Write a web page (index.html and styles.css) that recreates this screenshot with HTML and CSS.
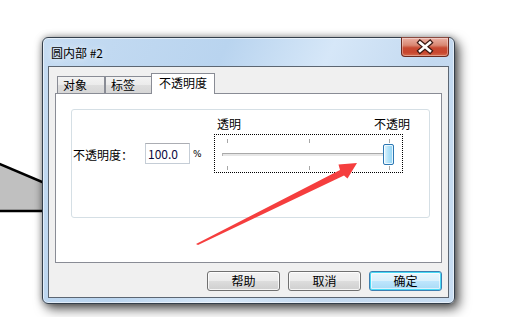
FILE: index.html
```html
<!DOCTYPE html>
<html lang="zh-CN">
<head>
<meta charset="utf-8">
<title>圆内部 #2</title>
<link rel="stylesheet" href="styles.css">
</head>
<body>
<div class="desk">
  <svg class="diagram" width="506" height="317" viewBox="0 0 506 317">
    <polygon points="-5,162 120,215 120,211 -5,211" fill="#c0c0c0"/>
    <line x1="-5" y1="162" x2="120" y2="215" stroke="#000" stroke-width="2.5"/>
    <line x1="-5" y1="211" x2="120" y2="211" stroke="#000" stroke-width="2.5"/>
  </svg>

  <div class="window">
    <div class="titlebar"><span class="title">圆内部 #2</span></div>
    <div class="close">
      <svg width="46" height="18" viewBox="0 0 46 18">
        <path d="M18 4.5 L28 13 M28 4.5 L18 13" stroke="#3a1812" stroke-width="5" stroke-linecap="square"/>
        <path d="M18 4.5 L28 13 M28 4.5 L18 13" stroke="#ffffff" stroke-width="2.6" stroke-linecap="square"/>
      </svg>
    </div>
    <div class="client">
      <div class="tabs">
        <div class="tab t1">对象</div>
        <div class="tab t2">标签</div>
        <div class="tab sel">不透明度</div>
      </div>
      <div class="panel">
        <div class="group">
          <span class="lbl">不透明度：</span>
          <div class="edit">100.0</div>
          <span class="pct">%</span>
          <div class="slider">
            <div class="ends"><span>透明</span><span>不透明</span></div>
            <div class="trackbox">
              <div class="track"></div>
              <i class="tick tt" style="left:12px"></i>
              <i class="tick tt" style="left:94px"></i>
              <i class="tick tt" style="left:174px"></i>
              <i class="tick tb" style="left:12px"></i>
              <i class="tick tb" style="left:94px"></i>
              <i class="tick tb" style="left:174px"></i>
              <div class="thumb"></div>
            </div>
          </div>
        </div>
      </div>
      <div class="buttons">
        <div class="btn">帮助</div>
        <div class="btn">取消</div>
        <div class="btn def">确定</div>
      </div>
    </div>
  </div>

  <svg class="arrow" width="506" height="317" viewBox="0 0 506 317">
    <polygon points="196,244 340,170 338.5,164.5 357,163 347.5,178.5 344,175.5 198,245" fill="#f53e3e"/>
  </svg>
</div>
</body>
</html>
```

FILE: styles.css
```css
* { box-sizing: border-box; }
html, body {
  margin: 0;
  padding: 0;
  background: #ffffff;
}
body {
  width: 506px;
  height: 317px;
  overflow: hidden;
  font-family: "Noto Sans CJK SC", "Noto Sans", sans-serif;
  font-size: 12px;
  color: #000;
}
.desk {
  position: relative;
  width: 506px;
  height: 317px;
}
.diagram {
  position: absolute;
  left: 0;
  top: 0;
}
.arrow {
  position: absolute;
  left: 0;
  top: 0;
  pointer-events: none;
}
.window {
  position: absolute;
  left: 42px;
  top: 37px;
  width: 413px;
  height: 267px;
  border: 1px solid #343f4b;
  border-radius: 6px;
  background: linear-gradient(115deg, #c6dcf2 0%, #b9d4ef 35%, #d6e7f8 55%, #c3d9f0 75%, #c8ddf2 100%);
  box-shadow: 4px 5px 12px rgba(0,0,0,0.65), 0 0 7px rgba(0,0,0,0.35), inset 0 0 0 1px rgba(255,255,255,0.55);
  padding: 0 5px 5px 5px;
  display: flex;
  flex-direction: column;
}
.titlebar {
  height: 28px;
  display: flex;
  align-items: center;
  padding-left: 3px;
  padding-top: 1px;
}
.title {
  font-size: 12px;
  line-height: 16px;
  text-shadow: 0 0 6px rgba(255,255,255,0.9);
}
.close {
  position: absolute;
  top: -1px;
  right: 5px;
  width: 48px;
  height: 20px;
  border: 1px solid #6b2a20;
  border-top-color: #8a4a40;
  border-radius: 0 0 4px 4px;
  background: linear-gradient(#ebb0a4 0%, #d98873 40%, #c74a32 55%, #c8462e 80%, #d46a4c 100%);
  box-shadow: inset 0 0 0 1px rgba(255,255,255,0.35);
}
.close svg { display: block; }
.client {
  flex: 1;
  border: 1px solid #5c6672;
  background: #f0f0f0;
  padding: 6px 6px 6px 6px;
  display: flex;
  flex-direction: column;
}
.tabs {
  height: 20px;
  display: flex;
  align-items: flex-end;
  padding-left: 2px;
  position: relative;
  z-index: 2;
}
.tab {
  height: 17px;
  border: 1px solid #898c95;
  border-bottom: none;
  background: linear-gradient(#f3f3f3 0%, #ebebeb 50%, #dedede 51%, #d6d6d6 100%);
  line-height: 15px;
  padding-left: 5px;
  font-size: 12px;
}
.t1 { width: 48px; }
.t2 { width: 47px; margin-left: 0; }
.sel {
  width: 64px;
  height: 21px;
  margin-left: -1px;
  margin-bottom: -1px;
  background: #ffffff;
  line-height: 18px;
  padding-left: 7px;
}
.panel {
  height: 170px;
  border: 1px solid #898c95;
  background: #ffffff;
  padding: 15px 11px 0 15px;
}
.group {
  height: 109px;
  border: 1px solid #d5dfe5;
  border-radius: 3px;
  display: flex;
  align-items: flex-end;
  padding: 0 0 44px 1px;
}
.lbl {
  width: 72px;
  line-height: 16px;
  margin-bottom: 10px;
}
.edit {
  width: 45px;
  height: 21px;
  border: 1px solid #c5cdd6;
  border-top-color: #abadb3;
  background: #fff;
  line-height: 19px;
  padding-left: 2px;
  margin-bottom: 9px;
  color: #0a0a40;
}
.pct {
  font-family: "DejaVu Sans", sans-serif;
  font-size: 9px;
  width: 7px;
  margin-left: 3px;
  margin-bottom: 13px;
  line-height: 12px;
}
.slider {
  margin-left: 14px;
  width: 196px;
  display: flex;
  flex-direction: column;
}
.ends {
  display: flex;
  justify-content: space-between;
  padding-left: 3px;
  line-height: 16px;
  margin-bottom: 2px;
}
.trackbox {
  position: relative;
  width: 189px;
  height: 39px;
  border: 1px dotted #000;
}
.track {
  position: absolute;
  left: 7px;
  top: 18px;
  width: 171px;
  height: 3px;
  border-top: 1px solid #a9a9a9;
  border-left: 1px solid #b5b5b5;
  background: #e7e7e7;
}
.tick {
  position: absolute;
  width: 1px;
  height: 4px;
  background: #a7a7a7;
}
.tt { top: 4px; }
.tb { top: 31px; }
.thumb {
  position: absolute;
  left: 168px;
  top: 9px;
  width: 11px;
  height: 21px;
  border: 1px solid #2c77b3;
  border-radius: 2px;
  background: linear-gradient(90deg, #e4f6fe 0%, #b4e3fa 45%, #8fd3f4 100%);
  box-shadow: inset 0 0 0 1px rgba(255,255,255,0.75);
}
.buttons {
  margin-top: 8px;
  display: flex;
  justify-content: flex-end;
  gap: 8px;
}
.btn {
  width: 73px;
  height: 20px;
  border: 1px solid #707070;
  border-radius: 3px;
  background: linear-gradient(#f2f2f2 0%, #ebebeb 50%, #dddddd 51%, #cfcfcf 100%);
  box-shadow: inset 0 0 0 1px rgba(255,255,255,0.8);
  text-align: center;
  line-height: 18px;
  font-size: 12px;
}
.btn.def {
  border-color: #3c7fb1;
  background: linear-gradient(#eaf6fd 0%, #d9f0fc 50%, #bee6fd 51%, #a7d9f5 100%);
  box-shadow: inset 0 0 0 1px #48d9f5, inset 0 0 0 2px rgba(255,255,255,0.6);
}
```
